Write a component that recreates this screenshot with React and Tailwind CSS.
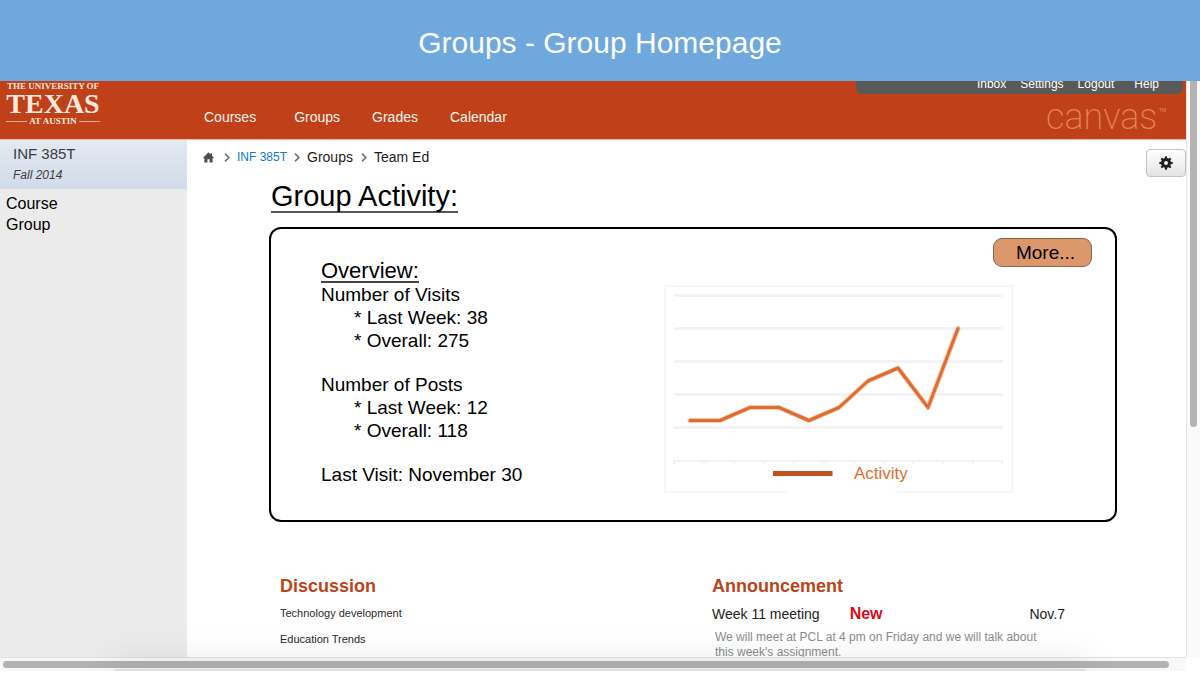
const navLinks = ["Courses", "Groups", "Grades", "Calendar"];
const userLinks = ["Inbox", "Settings", "Logout", "Help"];

const stats = [
  { title: "Number of Visits", week: 38, overall: 275 },
  { title: "Number of Posts", week: 12, overall: 118 },
];

function HomeIcon() {
  return (
    <svg viewBox="0 0 11 11" className="h-[11px] w-[11px]" fill="#4d4d4d" aria-hidden="true">
      <path d="M5.500 0.300 7.600 2.400V1.200H9V3.800L10.900 5.700 10.200 6.400 9.600 5.900V10.500H6.600V7.300H4.400V10.500H1.400V5.900L0.800 6.400 0.100 5.700Z" />
    </svg>
  );
}

function GearIcon() {
  const teeth = [0, 45, 90, 135, 180, 225, 270, 315];
  return (
    <svg viewBox="0 0 14 14" className="h-[14px] w-[14px]" aria-hidden="true">
      <circle cx="7" cy="7" r="3.500" fill="none" stroke="#1f1f1f" strokeWidth="3" />
      {teeth.map((a) => (
        <path key={a} d="M5.700 2.600 6.100 0.300H7.900L8.300 2.600Z" fill="#1f1f1f" transform={`rotate(${a} 7 7)`} />
      ))}
    </svg>
  );
}

function Chevron() {
  return (
    <svg viewBox="0 0 6 9" className="h-[9px] w-[6px]" fill="none" stroke="#777" strokeWidth="1.7" aria-hidden="true">
      <path d="M1 0.7 4.8 4.5 1 8.3" />
    </svg>
  );
}

function Logo() {
  return (
    <a href="#home" className="flex w-[94px] flex-col items-center font-['Liberation_Serif',serif] text-[#fbe9dc]">
      <span className="text-[9px] leading-[10px] font-bold whitespace-nowrap">THE UNIVERSITY OF</span>
      <span className="text-[28px] leading-[25px] font-bold">TEXAS</span>
      <span className="flex w-full items-center justify-center gap-[2px] text-[9px] leading-[10px] font-bold">
        <span className="h-px flex-1 bg-[#e9b08f]" />
        <span className="whitespace-nowrap">AT AUSTIN</span>
        <span className="h-px flex-1 bg-[#e9b08f]" />
      </span>
    </a>
  );
}

function TopBar() {
  return (
    <header className="flex h-[58px] shrink-0 justify-between bg-[#bf4019]">
      <div className="flex">
        <div className="w-[204px] shrink-0 pl-[6px]">
          <Logo />
        </div>
        <nav className="flex gap-8 pt-[27px] text-[14px] leading-[18px] text-[#fff4ec]">
          {navLinks.map((l) => (
            <a key={l} href={"#" + l.toLowerCase()} className="first:mr-[6px]">{l}</a>
          ))}
        </nav>
      </div>
      <div className="mr-[3px] flex w-[327px] flex-col">
        <nav className="flex h-[13px] items-end justify-end gap-[14px] overflow-hidden rounded-b-md bg-[#595959] pr-6 pb-1 text-[12px] leading-[12px] text-white">
          {userLinks.map((l) => (
            <a key={l} href={"#" + l.toLowerCase()} className="last:ml-[6px]">{l}</a>
          ))}
        </nav>
        <a href="#canvas" className="mt-1 flex items-start justify-end gap-px pr-4 font-[Roboto,sans-serif] font-extralight text-[#e58457]">
          <span className="text-[36px] leading-[38px]">canvas</span>
          <span className="mt-[8px] text-[14px] leading-[14px] font-light">™</span>
        </a>
      </div>
    </header>
  );
}

function Sidebar() {
  return (
    <aside className="w-[187px] shrink-0 bg-[#ebebeb]">
      <div className="flex h-[50px] flex-col gap-1 border-t border-[#f0b9a0] bg-linear-to-b from-[#e3e9f1] to-[#d2dbe8] pt-1 pl-[13px] text-[#3c3c3c]">
        <span className="text-[15px] leading-[20px]">INF 385T</span>
        <span className="text-[12px] leading-[14px] italic">Fall 2014</span>
      </div>
      <nav className="flex flex-col pt-1 pl-[6px] text-[16px] leading-[21px] text-black">
        <a href="#course">Course</a>
        <a href="#group">Group</a>
      </nav>
    </aside>
  );
}

function Breadcrumbs() {
  return (
    <nav aria-label="Breadcrumb" className="flex items-center gap-[7px] text-[14px] leading-[18px] text-[#1c1c1c]">
      <a href="#home" aria-label="Home" className="mr-[3px]"><HomeIcon /></a>
      <Chevron />
      <a href="#inf" className="text-[12px] text-[#0f77cb]">INF 385T</a>
      <Chevron />
      <a href="#groups" className="mr-px">Groups</a>
      <Chevron />
      <span>Team Ed</span>
    </nav>
  );
}

function ActivityChart() {
  const line = "M26 135.500H56L86 122.500H115L145 135.500L175 122.500L204 96L234 83L264 122.500L294 43.500";
  return (
    <svg viewBox="0 0 350 208" className="h-[208px] w-[350px] shrink-0" role="img" aria-label="Activity">
      <path d="M123 207H1V1H348.500V207H231" fill="none" stroke="#f6f6f6" strokeWidth="2" />
      <g stroke="#f3f3f6" strokeWidth="3">
        <path d="M10 10.500H339M10 43.500H339M10 76.500H339M10 109.500H339M10 142.500H339" />
        <path d="M10 176H339" strokeWidth="2" />
        <path
          d="M10 175v4M40 175v4M70 175v4M100 175v4M130 175v4M160 175v4M190 175v4M220 175v4M249 175v4M279 175v4M309 175v4M338 175v4"
          strokeWidth="2"
        />
      </g>
      <g fill="none" strokeLinejoin="round" strokeLinecap="round">
        <path d={line} stroke="#f6c9ac" strokeWidth="5" />
        <path d={line} stroke="#de6c30" strokeWidth="3" />
      </g>
      <path d="M109 188.500H168.500" stroke="#bf5320" strokeWidth="5" />
      <text x="190" y="194" fontSize="17" fill="#de6f33">Activity</text>
    </svg>
  );
}

function ActivityCard() {
  return (
    <section className="relative mt-[14px] flex h-[295px] justify-between rounded-xl border-2 border-black bg-white pr-[101px] pl-[50px]">
      <div className="pt-[31px] text-[19px] leading-[23px] text-black">
        <h2 className="w-fit border-b-2 border-[#444] text-[22px] leading-[21px]">Overview:</h2>
        <div className="flex flex-col gap-[21px]">
          {stats.map((s) => (
            <div key={s.title}>
              <p>{s.title}</p>
              <ul className="pl-[33px]">
                <li>* Last Week: {s.week}</li>
                <li>* Overall: {s.overall}</li>
              </ul>
            </div>
          ))}
          <p>Last Visit: November 30</p>
        </div>
      </div>
      <div className="pt-14">
        <ActivityChart />
      </div>
      <button
        type="button"
        className="absolute top-[9px] right-[23px] h-[29px] w-[99px] rounded-[9px] border border-[#8a6650] bg-[#dc986a] pl-[6px] text-[19px] leading-[24px] text-black"
      >
        More...
      </button>
    </section>
  );
}

function Feeds() {
  return (
    <div className="mt-[53px] flex pl-[11px]">
      <section className="w-[432px] shrink-0">
        <h2 className="text-[18px] leading-[22px] font-bold text-[#bb441b]">Discussion</h2>
        <ul className="mt-[3px] text-[11px] leading-[26px] text-[#2a2a2a]">
          <li>Technology development</li>
          <li>Education Trends</li>
        </ul>
      </section>
      <section className="flex-1">
        <h2 className="text-[18px] leading-[22px] font-bold text-[#bb441b]">Announcement</h2>
        <div className="mt-2 flex items-center pr-[52px] text-[14px] leading-[18px] text-[#222]">
          <span>Week 11 meeting</span>
          <strong className="ml-[30px] text-[16px] text-[#d60b1c]">New</strong>
          <time className="ml-auto">Nov.7</time>
        </div>
        <p className="mt-[7px] w-[330px] pl-[3px] text-[12px] leading-[15px] text-[#8c8c8c]">
          We will meet at PCL at 4 pm on Friday and we will talk about this week's assignment.
        </p>
      </section>
    </div>
  );
}

export default function App() {
  return (
    <div className="flex h-screen flex-col bg-white pb-[5px] font-['Liberation_Sans',Arial,sans-serif]">
      <div className="flex h-[81px] shrink-0 items-center justify-center bg-[#6fa8dc] pt-1">
        <h1 className="text-[30px] leading-[36px] text-white">Groups - Group Homepage</h1>
      </div>
      <div className="relative flex min-h-0 flex-1 flex-col overflow-hidden">
        <div className="flex min-h-0 flex-1">
          <div className="flex min-w-0 flex-1 flex-col overflow-hidden">
            <TopBar />
            <div className="flex min-h-0 flex-1">
              <Sidebar />
              <main className="min-w-0 flex-1 overflow-hidden border-t border-[#f0b9a0] pr-[69px] pl-[82px]">
                <div className="-mr-[69px] -ml-[66px] flex h-[38px] items-start justify-between">
                  <div className="pt-2"><Breadcrumbs /></div>
                  <button
                    type="button"
                    aria-label="Course settings"
                    className="mt-[9px] flex h-[28px] w-[40px] items-center justify-center rounded border border-[#c4c4c4] bg-linear-to-b from-white to-[#e4e4e4]"
                  >
                    <GearIcon />
                  </button>
                </div>
                <h2 className="ml-[2px] w-fit border-b-2 border-[#555] pt-1 text-[29px] leading-[29px] text-black">
                  Group Activity:
                </h2>
                <ActivityCard />
                <Feeds />
              </main>
            </div>
          </div>
          <div className="flex w-[14px] justify-center border-l border-[#e4e4e4] bg-[#fafafa]">
            <div className="h-[60%] w-[7px] rounded-b-full bg-[#b4b4b4]" />
          </div>
        </div>
        <div className="mr-[14px] flex h-[14px] shrink-0 items-center border-t border-[#e0e0e0] bg-[#f8f8f8] pr-[17px] pl-[3px]">
          <div className="h-[7px] w-full rounded-full bg-[#b2b2b2]" />
        </div>
        <div className="pointer-events-none absolute right-[115px] bottom-0 left-[115px] h-[2px] bg-black/10 shadow-[0_0_36px_4px_rgba(0,0,0,0.2)]" />
      </div>
    </div>
  );
}
